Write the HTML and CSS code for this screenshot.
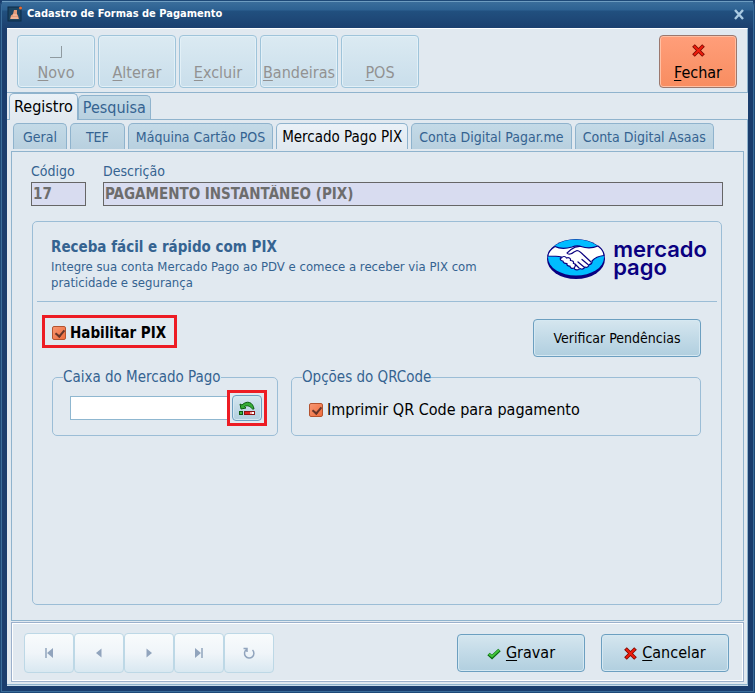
FILE: index.html
```html
<!DOCTYPE html>
<html lang="pt-BR">
<head>
<meta charset="utf-8">
<title>Cadastro de Formas de Pagamento</title>
<link rel="stylesheet" href="styles.css">
</head>
<body>
<div class="window">
  <header class="titlebar">
    <svg class="app-icon" width="16" height="16" viewBox="0 0 16 16" aria-hidden="true">
      <rect x="1" y="1" width="13" height="14" fill="#1c4562" stroke="#0c2c4a"/>
      <path d="M3 13l1-3.500 2-1.500 1-4h3v4l1 1.500 1 3.500z" fill="#e39a78"/>
      <path d="M4 12h7M6 9h4" stroke="#f8cdb4"/>
      <circle cx="13.500" cy="2" r="1.500" fill="#ef6b2c"/>
    </svg>
    <h1>Cadastro de Formas de Pagamento</h1>
    <button class="close" type="button" aria-label="Fechar janela">
      <svg width="12" height="11" viewBox="0 0 12 11"><path d="M2 1l8 9M10 1L2 10" stroke="#a9cae2" stroke-width="2.400"/></svg>
    </button>
  </header>
  <main class="client">
    <div class="toolbar">
      <button class="tool" type="button" disabled>
        <svg width="16" height="16" viewBox="0 0 16 16"><path d="M2 13.500h11.500V2" fill="none" stroke="#8f9aa0"/></svg>
        <span><u>N</u>ovo</span>
      </button>
      <button class="tool" type="button" disabled><span><u>A</u>lterar</span></button>
      <button class="tool" type="button" disabled><span><u>E</u>xcluir</span></button>
      <button class="tool" type="button" disabled><span><u>B</u>andeiras</span></button>
      <button class="tool" type="button" disabled><span><u>P</u>OS</span></button>
      <button class="tool tool-close" type="button">
        <svg width="13" height="13" viewBox="0 0 14 14"><path d="M3 3l8 8M11 3l-8 8" stroke="#7c0a00" stroke-width="4" stroke-linecap="square"/><path d="M3 3l8 8M11 3l-8 8" stroke="#ee1c0c" stroke-width="2.200" stroke-linecap="square"/></svg>
        <span><u>F</u>echar</span>
      </button>
    </div>
    <div class="tabs main-tabs" role="tablist">
      <button class="tab active" type="button" role="tab" aria-selected="true">Registro</button>
      <button class="tab" type="button" role="tab">Pesquisa</button>
    </div>
    <section class="record">
      <div class="tabs sub-tabs" role="tablist">
        <button class="tab" type="button" role="tab">Geral</button>
        <button class="tab wide" type="button" role="tab">TEF</button>
        <button class="tab" type="button" role="tab">Máquina Cartão POS</button>
        <button class="tab active" type="button" role="tab" aria-selected="true">Mercado Pago PIX</button>
        <button class="tab" type="button" role="tab">Conta Digital Pagar.me</button>
        <button class="tab" type="button" role="tab">Conta Digital Asaas</button>
      </div>
      <div class="page">
        <div class="fields">
          <div class="field code">
            <label for="codigo">Código</label>
            <input id="codigo" type="text" value="17" readonly>
          </div>
          <div class="field description">
            <label for="descricao">Descrição</label>
            <input id="descricao" type="text" value="PAGAMENTO INSTANTÂNEO (PIX)" readonly>
          </div>
        </div>
        <div class="panel">
          <div class="intro">
            <div class="intro-text">
              <h2>Receba fácil e rápido com PIX</h2>
              <p>Integre sua conta Mercado Pago ao PDV e comece a receber via PIX com praticidade e segurança</p>
            </div>
            <div class="brand">
              <svg width="60" height="42" viewBox="0 0 60 42" aria-hidden="true">
                <ellipse cx="30" cy="22" rx="29" ry="20" fill="#0a0080"/>
                <ellipse cx="30" cy="20.500" rx="28" ry="18" fill="#00bcff"/>
                <path d="M9 9.500c6 3 12 2 17 .5 2.500-1 6-1.500 9-.5 6 2 11 2 17-.5 4 3 6 6 6 9.500-5 .5-9 2-12 5.500.5 2-1 3.500-3 3.500 0 2-2 3.500-4 2.500-1 2-3 2.500-5 1.500-1.500 2-5 2-6-.5-2 1-4 0-4-2-2 .5-3.500-1-3-2.500-2.500 0-4-1-4-2.500-3 0-3.500-3-1.500-4C11 19 6 19 2 19c0-4 3-7 7-9.500z" fill="#fff" stroke="#0a0080" stroke-width="1.200" stroke-linejoin="round"/>
                <path d="M35 9.500c-5-.5-8 1.500-10 3l-4 3.500c1.500 2 4.500 1 7-1l3-1.500c2 0 4 2 6 4l8 7.500M36 22.500l6 5M32 25l6 5M29 27l4 4M15.500 21c1-2 4-2 5 0 2-1 4.500 0 4 2.500 2 0 3.500 1 3 3 2 0 2.500 2 1 4" fill="none" stroke="#0a0080" stroke-width="1.200" stroke-linecap="round"/>
              </svg>
              <span>mercado<br>pago</span>
            </div>
          </div>
          <div class="enable-row">
            <label class="check highlight strong"><input type="checkbox" checked>Habilitar PIX</label>
            <button class="action verify" type="button">Verificar Pendências</button>
          </div>
          <div class="groups">
            <fieldset class="cash">
              <legend>Caixa do Mercado Pago</legend>
              <input type="text" aria-label="Caixa do Mercado Pago">
              <span class="highlight lookup-box">
                <button class="action lookup" type="button" aria-label="Buscar caixa">
                  <svg width="18" height="16" viewBox="0 0 18 16"><path d="M2 4l1 5 5-1-1.500-1.500c3-1.500 5-.5 8 2.500h1.500C15 2 9 0 4 5z" fill="#36ad36" stroke="#0c5c10" stroke-linejoin="round"/><rect x="1.500" y="11.500" width="3" height="3" fill="#3eb13e" stroke="#0c5c10"/><rect x="6.500" y="11.500" width="10" height="3" fill="#fff" stroke="#8b1212"/><path d="M7 13h5" stroke="#e02020" stroke-width="2"/><path d="M12 13h2" stroke="#f8a0a0" stroke-width="2"/></svg>
                </button>
              </span>
            </fieldset>
            <fieldset class="qr">
              <legend>Opções do QRCode</legend>
              <label class="check"><input type="checkbox" checked>Imprimir QR Code para pagamento</label>
            </fieldset>
          </div>
        </div>
      </div>
      <footer class="bottom">
        <nav class="navigator" aria-label="Registros">
          <button type="button" aria-label="Primeiro" disabled><svg width="14" height="14" viewBox="0 0 14 14"><path d="M4 2v10" stroke="#91a4bd" stroke-width="1.500"/><path d="M11 2v10L5 7z" fill="#91a4bd"/></svg></button>
          <button type="button" aria-label="Anterior" disabled><svg width="14" height="14" viewBox="0 0 14 14"><path d="M9.500 2.500v9L4 7z" fill="#91a4bd"/></svg></button>
          <button type="button" aria-label="Próximo" disabled><svg width="14" height="14" viewBox="0 0 14 14"><path d="M4.500 2.500v9L10 7z" fill="#91a4bd"/></svg></button>
          <button type="button" aria-label="Último" disabled><svg width="14" height="14" viewBox="0 0 14 14"><path d="M10 2v10" stroke="#91a4bd" stroke-width="1.500"/><path d="M3 2v10l6-5z" fill="#91a4bd"/></svg></button>
          <button type="button" aria-label="Atualizar" disabled><svg width="14" height="14" viewBox="0 0 14 14"><path d="M4.500 3.500A4.700 4.700 0 1 0 10.500 4M1.500 2.500h3.500v3.500" fill="none" stroke="#91a4bd" stroke-width="1.500"/></svg></button>
        </nav>
        <button class="action submit" type="button"><svg width="14" height="14" viewBox="0 0 14 14"><path d="M1.500 8l3.500 3 7.500-7" fill="none" stroke="#0b6a12" stroke-width="3.600"/><path d="M2 8l3 2.500 7-6.500" fill="none" stroke="#43c43a" stroke-width="2"/></svg><span><u>G</u>ravar</span></button>
        <button class="action submit" type="button"><svg width="13" height="13" viewBox="0 0 14 14"><path d="M3 3l8 8M11 3l-8 8" stroke="#7c0a00" stroke-width="4" stroke-linecap="square"/><path d="M3 3l8 8M11 3l-8 8" stroke="#ee1c0c" stroke-width="2.200" stroke-linecap="square"/></svg><span><u>C</u>ancelar</span></button>
      </footer>
    </section>
  </main>
</div>
</body>
</html>
```
FILE: styles.css
```css
:root {
  --face: #e1e9f0;
  --line: #8fb3cd;
  --ink: #356391;
  --red: #ed1c24;
}

* { box-sizing: border-box; }

body {
  margin: 0;
  background: #1a3d6d;
  color: #000;
  font: 16px/20px "DejaVu Sans Condensed", "DejaVu Sans", sans-serif;
}

button, input { font: inherit; }
button { margin: 0; padding: 0; color: inherit; }
svg { display: block; flex: none; }
u { text-underline-offset: 2px; }

.window {
  display: flex;
  flex-direction: column;
  min-height: 100vh;
  padding: 0 7px 7px;
  background: #1a3d6d;
  border-radius: 6px 6px 0 0;
  box-shadow: inset 0 0 0 1px #1d4877, inset 0 0 0 2px #3a6c99;
}

.titlebar {
  display: flex;
  align-items: center;
  gap: 4px;
  height: 28px;
  margin: 0 -5px;
  padding: 0 8px 0 5px;
  background: linear-gradient(#1d4877 0 1px, #6d9cc0 1px 2px, #3a6d9b 2px, #2d6192 10px, #21507f 11px, #1c4170 27px);
}

.titlebar h1 {
  flex: 1;
  margin: 0;
  color: #fff;
  font-size: 11px;
  line-height: 16px;
}

.close { border: 0; background: none; }

.client {
  display: flex;
  flex: 1;
  flex-direction: column;
  background: var(--face);
  border-bottom: 1px solid #c9dcea;
}

.toolbar {
  display: flex;
  gap: 3px;
  padding: 6px 10px 4px;
  border-top: 1px solid #fff;
  border-right: 1px solid var(--line);
  border-bottom: 1px solid var(--line);
}

.tool {
  display: flex;
  flex-direction: column;
  align-items: center;
  justify-content: flex-end;
  gap: 3px;
  width: 78px;
  height: 53px;
  padding-bottom: 4px;
  border: 1px solid #9fc4da;
  border-radius: 4px;
  background: linear-gradient(#dbeaf2, #c9deeb);
  box-shadow: inset 0 0 0 1px #e2f0f7;
  color: #929292;
}

.tool-close {
  gap: 6px;
  margin-left: auto;
  border-color: #9b786e;
  background: linear-gradient(#ff9e7a, #f88d60);
  box-shadow: inset 0 0 0 1px #ffc0a4;
  color: #000;
}

.tabs { display: flex; align-items: flex-end; }

.tab {
  border: 1px solid var(--line);
  border-bottom: 0;
  border-radius: 5px 5px 0 0;
  background: linear-gradient(#c4dae7, #b8d0df);
  color: var(--ink);
}

.main-tabs {
  z-index: 1;
  margin: 0 0 -1px 2px;
}

.main-tabs .tab { height: 24px; padding: 0 4px; margin-bottom: 1px; }
.main-tabs .active { height: 27px; margin-bottom: 0; }

.tab.active { background: linear-gradient(#eaf1f7, var(--face)); color: #000; }

.record {
  display: flex;
  flex: 1;
  flex-direction: column;
  padding: 3px 3px 2px 4px;
  border: solid var(--line);
  border-width: 1px 1px 1px 0;
}

.sub-tabs { gap: 3px; padding: 0 2px; height: 28px; align-items: flex-start; }
.sub-tabs .tab { height: 26px; padding: 0 7px; font-size: 14px; white-space: nowrap; }
.sub-tabs .active { padding: 0 5px; font-size: 15px; }
.sub-tabs .tab:first-child { padding: 0 9px; }
.sub-tabs .wide { padding: 0 15px; }

.page {
  display: flex;
  flex: 1;
  flex-direction: column;
  gap: 15px;
  padding: 9px 21px 15px 20px;
  border: 1px solid var(--line);
}

.fields { display: flex; gap: 17px; margin: 0 -1px; }

.field { display: flex; flex-direction: column; gap: 1px; font-size: 14px; }
.field label { color: var(--ink); }
.code { width: 55px; }
.description { flex: 1; }

.field input {
  width: 100%;
  height: 24px;
  padding: 0 1px;
  border: 1px solid #666;
  border-radius: 0;
  background: #d8dcf0;
  color: #6d6d6d;
  font-size: 15px;
  font-weight: bold;
}

.panel {
  flex: 1;
  border: 1px solid #9bbdd6;
  border-radius: 5px;
  padding: 0 4px;
}

.intro {
  display: flex;
  align-items: flex-start;
  justify-content: space-between;
  padding: 15px 10px 10px 14px;
  border-bottom: 1px solid #9bbdd6;
}

.intro-text { max-width: 440px; color: var(--ink); }
.intro h2 { margin: 0 0 2px; font-size: 15px; line-height: 20px; }
.intro p { margin: 0; font-size: 13px; line-height: 16px; }

.brand {
  display: flex;
  align-items: center;
  gap: 7px;
  color: #0a0080;
  font: 600 22px/18px Inter, sans-serif;
}

.enable-row {
  display: flex;
  align-items: flex-start;
  justify-content: space-between;
  padding: 13px 16px 0 5px;
}

.highlight { border: 3px solid var(--red); }

.check { display: flex; align-items: center; gap: 4px; }
.check.highlight { padding: 5px 8px 2px 7px; }
.strong { font-size: 15px; font-weight: bold; }

.check input {
  appearance: none;
  width: 14px;
  height: 14px;
  margin: 0;
  border: 1px solid #b4532f;
  border-radius: 2px;
  background: linear-gradient(135deg, #f69672, #f06d3d);
}

.check input::before {
  content: "";
  display: block;
  width: 4px;
  height: 7px;
  margin: 1px 4px;
  border: solid #66352a;
  border-width: 0 2px 2px 0;
  transform: rotate(40deg);
}

.action {
  display: flex;
  align-items: center;
  justify-content: center;
  gap: 5px;
  height: 38px;
  border: 1px solid #6c9fc0;
  border-radius: 4px;
  background: linear-gradient(#d5e6ef, #c2dae7 50%, #b1cfdf);
  box-shadow: inset 0 0 0 1px #d5e8f2;
}

.verify { width: 168px; margin-top: 4px; font-size: 14px; }

.groups { display: flex; gap: 13px; padding: 10px 16px 0 15px; }

fieldset {
  display: flex;
  align-items: center;
  margin: 0;
  min-width: 0;
  height: 69px;
  padding: 0 10px 6px 17px;
  border: 1px solid #9bbdd6;
  border-radius: 5px;
}

legend {
  margin-left: -7px;
  padding: 0;
  color: var(--ink);
  font-size: 15px;
  line-height: 20px;
}

.cash { width: 226px; }
.qr { flex: 1; padding-bottom: 2px; }

.cash input {
  flex: 1;
  min-width: 0;
  height: 24px;
  border: 1px solid #8fb7d0;
  border-right: 0;
  background: #fff;
}

.lookup-box { padding: 2px; }
.lookup { width: 30px; height: 26px; }

.bottom {
  display: flex;
  align-items: center;
  gap: 16px;
  height: 60px;
  padding: 2px 14px 0 12px;
  border: 1px solid #9bb0cc;
  outline: 1px solid #fff;
  outline-offset: -2px;
  margin-top: 1px;
}

.navigator { display: flex; flex: 1; }

.navigator button {
  display: flex;
  align-items: center;
  justify-content: center;
  width: 50px;
  height: 40px;
  border: 1px solid #bdd8e6;
  border-radius: 4px;
  background: linear-gradient(#f8fbfc, #f0f5f9 50%, #d9e8f1);
}

.submit { width: 128px; }
```
